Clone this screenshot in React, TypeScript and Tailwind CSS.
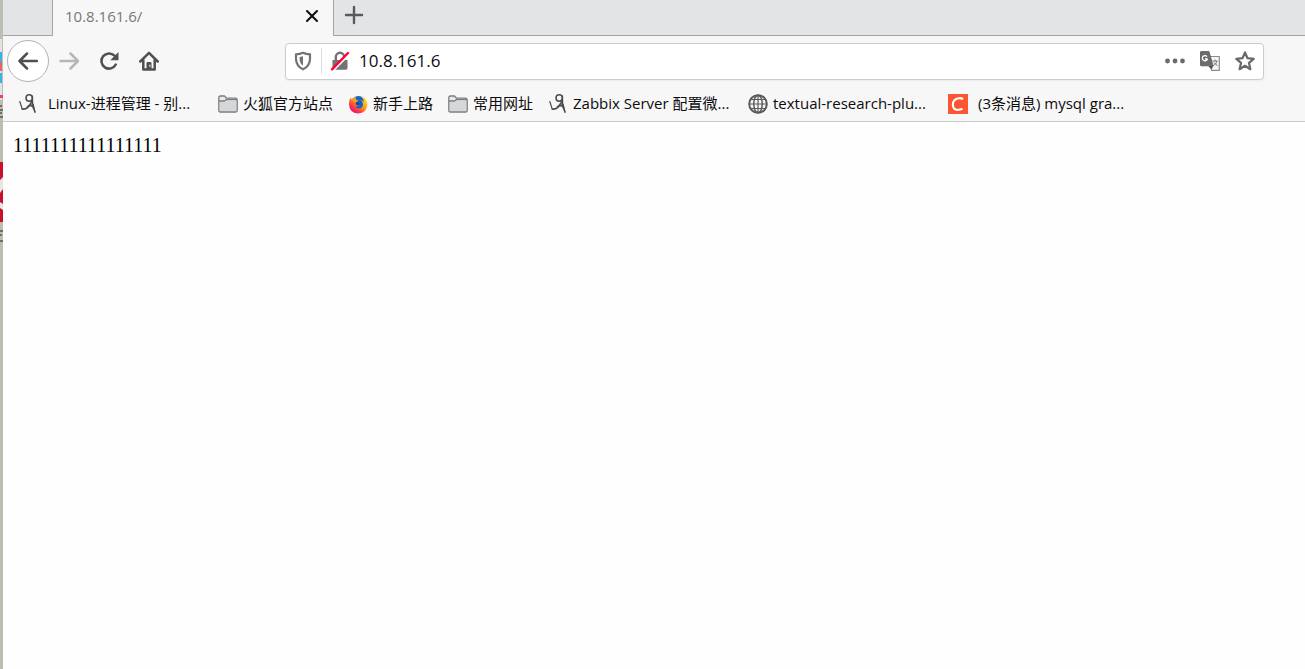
import React, { useState } from 'react';

type IconName = 'blog' | 'folder' | 'firefox' | 'globe' | 'csdn';

interface Bookmark {
  icon: IconName;
  title: string;
  spacing: string;
}

const bookmarks: Bookmark[] = [
  { icon: 'blog', title: 'Linux-进程管理 - 别...', spacing: 'gap-[10px] w-[200px]' },
  { icon: 'folder', title: '火狐官方站点', spacing: 'gap-[5px] w-[130px]' },
  { icon: 'firefox', title: '新手上路', spacing: 'gap-[5px] w-[100px]' },
  { icon: 'folder', title: '常用网址', spacing: 'gap-[5px] w-[100px]' },
  { icon: 'blog', title: 'Zabbix Server 配置微...', spacing: 'gap-[5px] w-[200px]' },
  { icon: 'globe', title: 'textual-research-plu...', spacing: 'gap-[5px] w-[200px]' },
  { icon: 'csdn', title: '(3条消息) mysql gra...', spacing: 'gap-[10px] w-[200px]' },
];

function BookmarkIcon({ name }: { name: IconName }) {
  if (name === 'folder') {
    return (
      <svg className="h-5 w-5 shrink-0" viewBox="0 0 20 20" fill="none" stroke="#7b7c7d" strokeWidth="1.3" strokeLinejoin="round">
        <path d="M.8 16.5V3.8Q.8 2 2.5 2h4l2 2.2h9q1.7 0 1.7 1.8v10.5q0 1.5-1.5 1.5H2.3Q.8 18 .8 16.5Z" fill="#e8e9ea" />
        <path d="M1 7h5.5l2-1.4H19" />
        <path d="M2 8h5l2-1.2h9V17H2Z" fill="#d5d7d8" stroke="none" />
      </svg>
    );
  }
  if (name === 'firefox') {
    return (
      <svg className="h-5 w-5 shrink-0" viewBox="0 0 20 20">
        <defs>
          <linearGradient id="flame" x1="0.85" y1="0.1" x2="0.2" y2="0.9">
            <stop offset="0" stopColor="#ffe226" />
            <stop offset="0.45" stopColor="#ff9a16" />
            <stop offset="0.75" stopColor="#ff3d42" />
            <stop offset="1" stopColor="#e01572" />
          </linearGradient>
        </defs>
        <circle cx="10.5" cy="9.5" r="7.5" fill="#1663c7" />
        <path d="M2.5 3.5 3.8 5.2Q5 4.2 6.3 4.3L8 2.7 7.8 5.5Q9.8 5.7 10.2 7L7.8 8.2Q7 10 8.5 10.6 10 11 11.3 10.3 10.2 13 7.5 12.4 9 15 12 14.2 15 13.2 15 10.2 15 7.4 12.7 6 15 6.3 16 8 15.7 4.5 12.5 2 19.3 4 19.3 10.5 19 19.2 10 19.4 1.5 19 1 10.5 1 6 2.5 3.5Z" fill="url(#flame)" />
        <path d="M8 9.2Q9.8 8 11.5 9.2 11 12 8.5 11Z" fill="#113b93" />
      </svg>
    );
  }
  if (name === 'globe') {
    return (
      <svg className="h-5 w-5 shrink-0" viewBox="0 0 20 20" fill="none" stroke="#5b5b5b" strokeWidth="1.5">
        <circle cx="10" cy="10" r="8.8" strokeWidth="2" />
        <ellipse cx="10" cy="10" rx="4.2" ry="8.8" />
        <path d="M10 1v18M1 10h18M2.8 5.5h14.4M2.8 14.5h14.4" strokeWidth="1.2" />
      </svg>
    );
  }
  if (name === 'csdn') {
    return (
      <svg className="h-5 w-5 shrink-0" viewBox="0 0 20 20">
        <path d="M0 0h20v20H0Z" fill="#fc5531" />
        <path d="M15 5.2Q13.4 4 11 4.2 5 4.8 4.8 10.8 5 15.8 9.6 16 12.6 16 14.5 14.7" fill="none" stroke="#fff" strokeWidth="2.1" />
      </svg>
    );
  }
  return (
    <svg className="h-5 w-5 shrink-0" viewBox="0 0 20 20" fill="none" stroke="#4a4a4a" strokeLinecap="round" strokeLinejoin="round">
      <circle cx="11.2" cy="4" r="3.2" strokeWidth="1.5" />
      <path d="M1.8 7.5 4.2 14.9" strokeWidth="1.2" />
      <path d="M4.2 15Q8 15.8 10.5 12.8L14.3 7" strokeWidth="1.6" />
      <path d="m14.4 2.2.1 7 2.5 9" strokeWidth="1.4" />
      <path d="M9 12.4q3-.8 5.2.2l2.8 5.6-1.7-8Z" fill="#4a4a4a" strokeWidth=".6" />
    </svg>
  );
}

// slice of the desktop that shows beside the window
function DesktopEdge() {
  return (
    <svg className="h-64 w-[3px] shrink-0" viewBox="0 0 3 256" preserveAspectRatio="none">
      <path d="M0 39h2v61H0Z" fill="#e2e2e4" />
      <path d="M0 52h2v10H0Zm0 21h2v10H0Z" fill="#34b5e5" />
      <path d="M0 62h2v9H0Z" fill="#f0606c" />
      <path d="M0 95h3v3H0Z" fill="#e2456c" />
      <path d="M0 106h2m-2 4h3m-3 3h2m-2 4h3M0 231h3m-3 4h2m-2 6h3" stroke="#222" />
      <path d="M0 162h3v60H0Z" fill="#c8102e" />
      <path d="m0 180 3-3v12l-3 4Zm0 22 3 2v6l-3-2Z" fill="#e8e4e4" />
    </svg>
  );
}

export default function App() {
  const [url, setUrl] = useState('10.8.161.6');

  return (
    <div className="flex min-h-screen bg-[#bdbeb0] font-['Open_Sans','Noto_Sans_CJK_SC',sans-serif] text-[#0c0c0d]">
      <DesktopEdge />
      <div className="flex min-w-0 flex-1 flex-col bg-[#fefefe]">
        {/* tabs */}
        <div className="flex h-9 bg-[#e3e4e6]">
          <div className="w-[50px] border-r border-b border-[#a3a3a0]" />
          <div className="flex w-[280px] items-center justify-between bg-[#f7f7f8] pr-[11px] pb-1 pl-3">
            <span className="text-[15px] leading-5 text-[#77777a]">10.8.161.6/</span>
            <button aria-label="Close tab" className="p-1">
              <svg className="h-3 w-3" viewBox="0 0 12 12" stroke="#0c0c0d" strokeWidth="2" strokeLinecap="round">
                <path d="m1 1 10 10M11 1 1 11" />
              </svg>
            </button>
          </div>
          <div className="flex-1 border-b border-l border-[#a3a3a0] pt-[3px] pl-2">
            <button aria-label="New tab" className="block p-0.5">
              <svg className="h-5 w-5" viewBox="0 0 20 20" stroke="#5a5a5b" strokeWidth="2.4" strokeLinecap="round">
                <path d="M10 2v16M2 10h16" />
              </svg>
            </button>
          </div>
        </div>

        {/* navigation */}
        <div className="flex h-[50px] items-center bg-[#f7f7f8] pr-[41px] pl-1">
          <button aria-label="Back" className="flex h-[42px] w-[42px] items-center justify-center rounded-full border border-[#b1b3b8] bg-white">
            <svg className="h-5 w-5" viewBox="0 0 20 20" fill="none" stroke="#505051" strokeWidth="2.5" strokeLinecap="round" strokeLinejoin="round">
              <path d="M19 10H1.5M9 2.5 1.5 10 9 17.5" />
            </svg>
          </button>
          <button aria-label="Forward" disabled className="ml-[10px]">
            <svg className="h-5 w-5" viewBox="0 0 20 20" fill="none" stroke="#b6b6b8" strokeWidth="2.5" strokeLinecap="round" strokeLinejoin="round">
              <path d="M1.5 10H19M11.5 2.5 19 10l-7.5 7.5" />
            </svg>
          </button>
          <button aria-label="Reload" className="ml-5">
            <svg className="h-5 w-5" viewBox="0 0 20 20" fill="none" stroke="#505051" strokeWidth="2.5" strokeLinecap="round">
              <path d="M16.8 13.5A7.6 7.6 0 1 1 15.5 4.7" />
              <path d="M19.5 1v8.2h-8.2Z" fill="#505051" stroke="none" />
            </svg>
          </button>
          <button aria-label="Home" className="ml-5">
            <svg className="h-5 w-5" viewBox="0 0 20 20" fill="none" stroke="#505051" strokeWidth="2.5" strokeLinecap="round" strokeLinejoin="round">
              <path d="M1.3 10.5 10 1.8l8.7 8.7M4.3 9v9.5h11.4V9" />
              <path d="M8 18v-6.5h4V18" fill="#505051" strokeWidth="1" />
              <path d="M10.8 14v1.5" stroke="#eee" strokeWidth="1" />
            </svg>
          </button>

          <div className="ml-[126px] flex h-[37px] min-w-0 flex-1 items-center rounded-sm border border-[#cbcccf] bg-white pr-2 pl-[7px] shadow-xs">
            <button aria-label="Tracking protection">
              <svg className="h-5 w-5" viewBox="0 0 20 20" fill="none" stroke="#737374" strokeWidth="2.2" strokeLinejoin="round">
                <path d="M10 1.8Q13 3.2 17 3.3v5Q16.5 15.2 10 18.3 3.5 15.2 3 8.3v-5Q7 3.2 10 1.8Z" />
                <path d="M10 5.3v9.2Q6.8 12.5 6.6 8.7V6Z" fill="#737374" stroke="none" />
              </svg>
            </button>
            <span className="mx-2 h-[26px] w-px bg-[#dcdcdd]" />
            <button aria-label="Connection is not secure">
              <svg className="h-5 w-5" viewBox="0 0 20 20" fill="none">
                <path d="M5.8 9V6a4.2 4.2 0 0 1 8.4 0v3" stroke="#737374" strokeWidth="2.4" />
                <path d="M2.5 9h15v8q0 1.7-1.7 1.7H4.2Q2.5 18.7 2.5 17Z" fill="#737374" />
                <path d="M3.2 19.5 20 2.7" stroke="#fff" strokeWidth="2" />
                <path d="M2 18.3 18 2" stroke="#ff0039" strokeWidth="2.4" strokeLinecap="round" />
              </svg>
            </button>
            <input
              aria-label="Address"
              value={url}
              onChange={(e) => setUrl(e.target.value)}
              className="ml-[9px] min-w-0 flex-1 bg-transparent text-[17px] leading-6 outline-none"
            />
            <div className="flex gap-[15px]">
              <button aria-label="Page actions">
                <svg className="h-5 w-5" viewBox="0 0 20 20" fill="#69696a">
                  <circle cx="2.5" cy="10" r="2.4" />
                  <circle cx="10" cy="10" r="2.4" />
                  <circle cx="17.5" cy="10" r="2.4" />
                </svg>
              </button>
              <button aria-label="Translate page">
                <svg className="h-5 w-5" viewBox="0 0 20 20" fill="none" strokeLinejoin="round">
                  <path d="M9.5 5.5h9.8v13.8H11" fill="#f6f6f6" stroke="#8a8b8c" strokeWidth="1.2" />
                  <path d="M12.5 10h5m-2.5-1.5V10m2 0q-.8 3.5-4 5m1-3.5q1.5 2 3.5 3" stroke="#777" strokeWidth="1" />
                  <path d="M1 .6h8l4 14.2H1Q.5 14.8.5 14V1Q.5.6 1 .6Z" fill="#6b6d6e" stroke="#555" strokeWidth=".8" />
                  <path d="m8.5 15 3 4 1.5-4Z" fill="#505151" />
                  <path d="M7 5.6A2.6 2.6 0 1 0 7.4 8H5" stroke="#fff" strokeWidth="1.3" />
                </svg>
              </button>
              <button aria-label="Bookmark this page">
                <svg className="h-5 w-5" viewBox="0 0 20 20" fill="none" stroke="#69696a" strokeWidth="2.2" strokeLinejoin="round">
                  <path d="m10 1.5 2.5 5.7 6.2.6-4.7 4.1 1.4 6.3-5.4-3.4-5.4 3.4L6 11.9 1.3 7.8l6.2-.6Z" />
                </svg>
              </button>
            </div>
          </div>
        </div>

        {/* bookmarks */}
        <nav className="flex h-9 items-center overflow-hidden border-b border-[#c9cacc] bg-[#f7f7f8] pl-[15px]">
          {bookmarks.map((item) => (
            <a key={item.title} href="#" className={`flex shrink-0 items-center whitespace-nowrap text-[15px] leading-5 ${item.spacing}`}>
              <BookmarkIcon name={item.icon} />
              <span className="pb-0.5">{item.title}</span>
            </a>
          ))}
        </nav>

        <main className="px-[10px] py-[11px] font-['Liberation_Serif',serif] text-[20px] leading-6 text-black">
          1111111111111111
        </main>
      </div>
    </div>
  );
}
